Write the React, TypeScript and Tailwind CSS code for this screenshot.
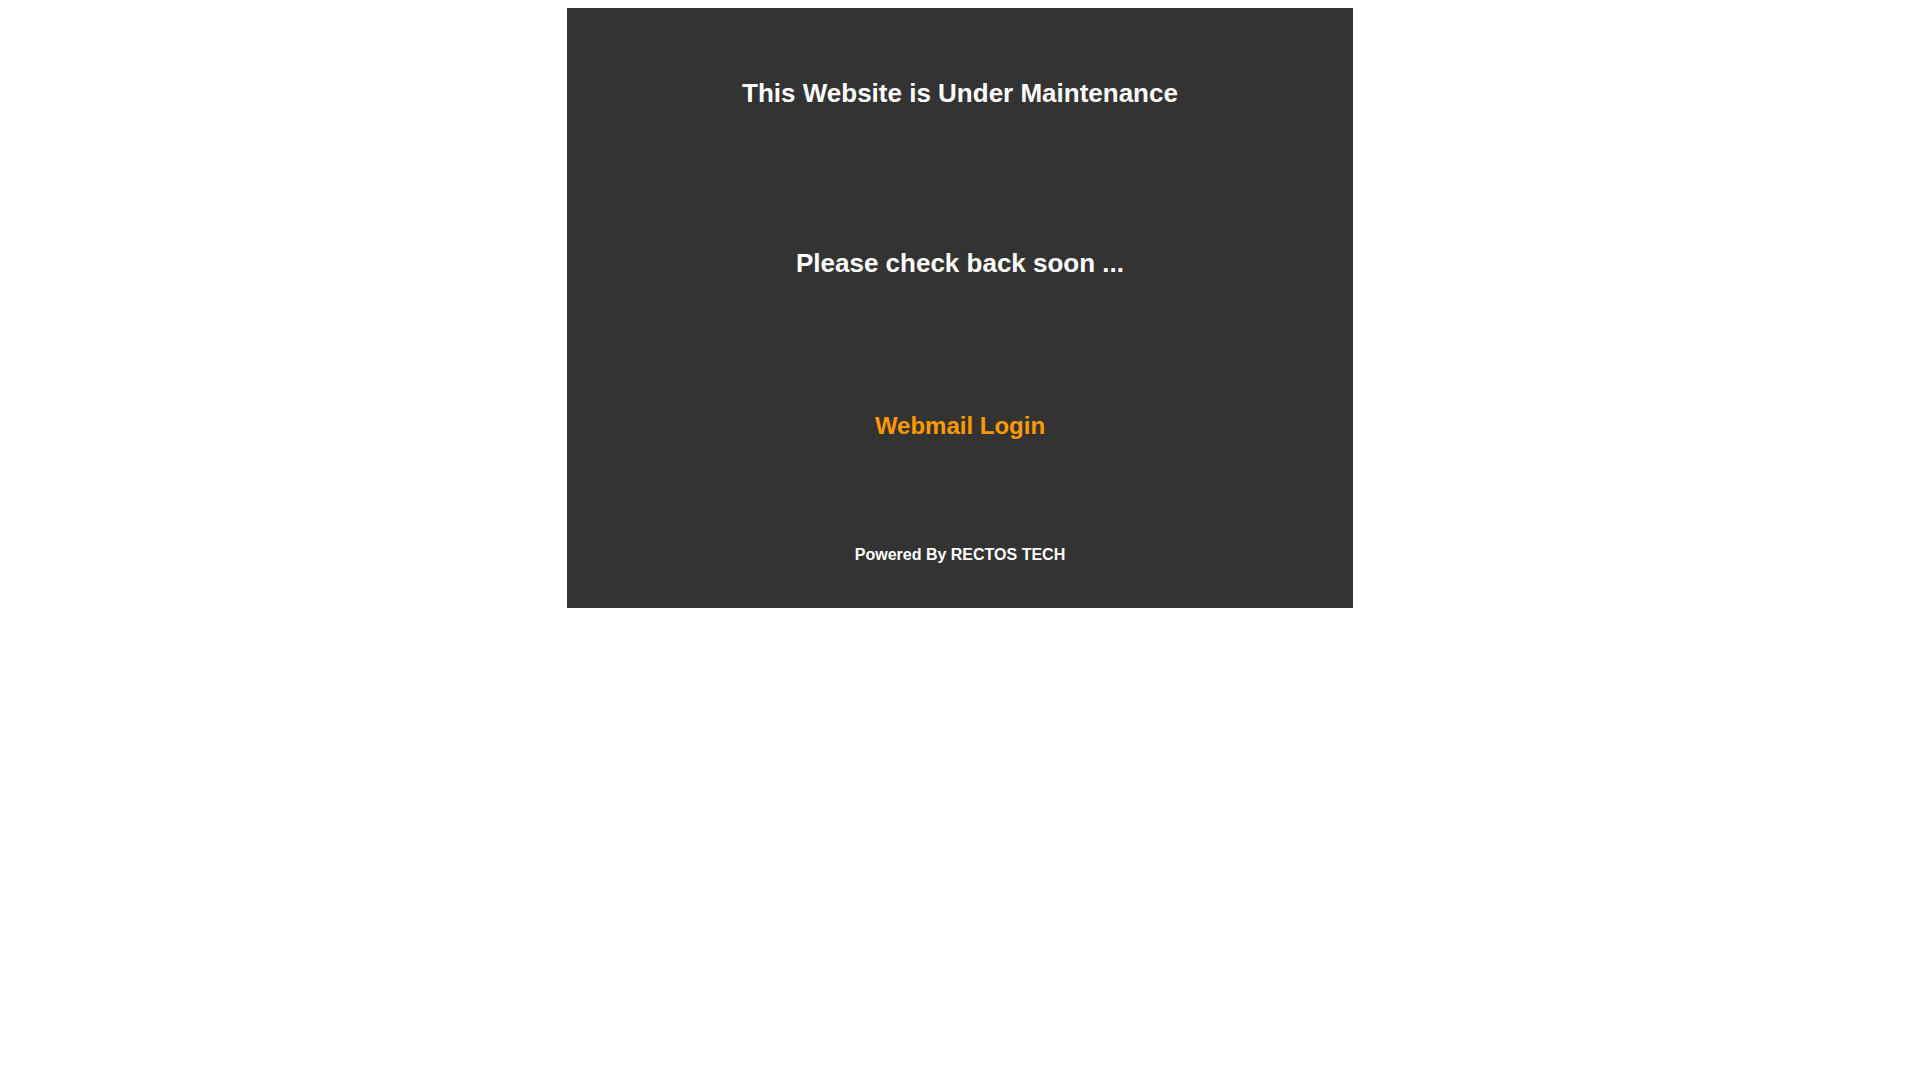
export default function App() {
  return (
    <div className="min-h-screen bg-white pt-[8px] font-['Liberation_Sans',Arial,sans-serif]">
      <main className="mx-auto flex h-[600px] w-[786px] flex-col items-center bg-[#333333] pt-[70px] text-center font-bold">
        <h1 className="text-[26px] leading-[30px] text-white">This Website is Under Maintenance</h1>
        <p className="mt-[140px] text-[26px] leading-[30px] text-white">Please check back soon ...</p>
        <a href="#" className="mt-[134px] text-[24px] leading-[28px] text-[#ff9900]">
          Webmail Login
        </a>
        <p className="mt-[105px] text-[16px] leading-[20px] text-white">Powered By RECTOS TECH</p>
      </main>
    </div>
  );
}
